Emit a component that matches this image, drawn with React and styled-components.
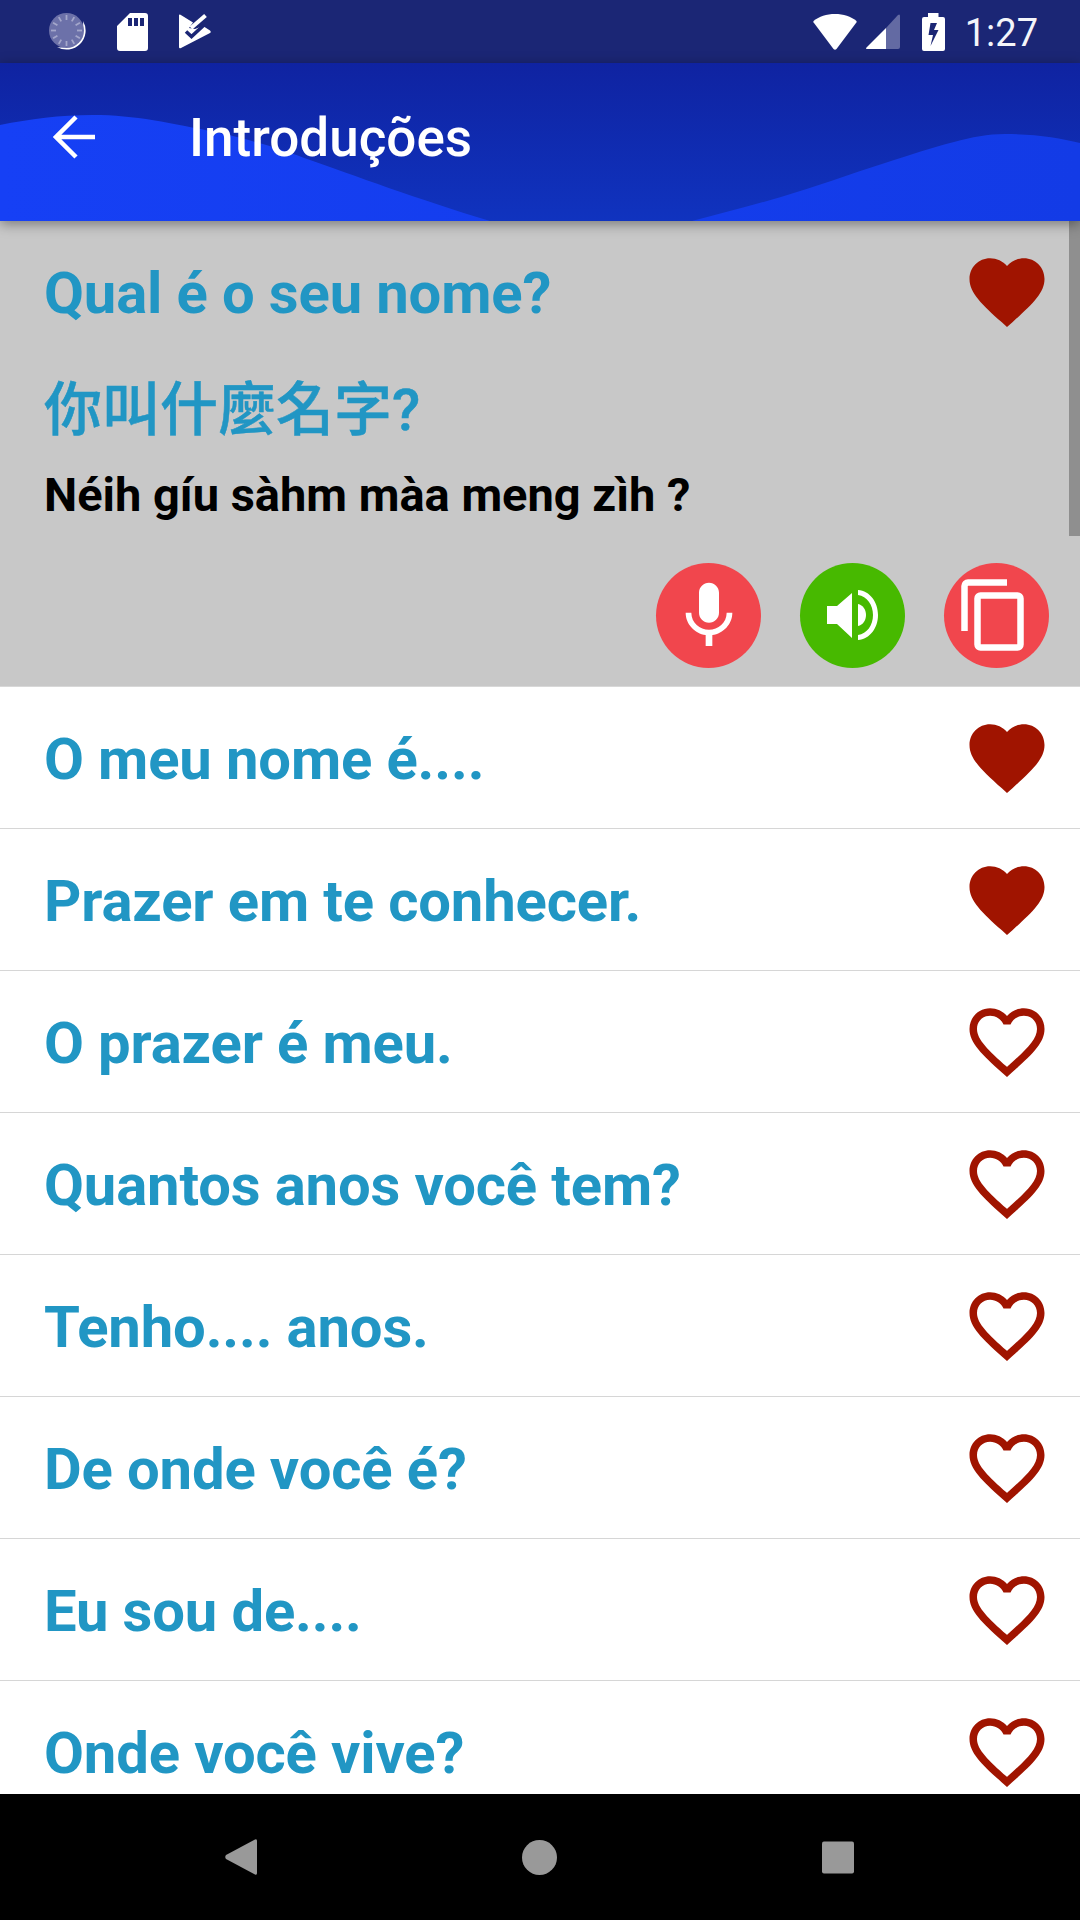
import styled, { createGlobalStyle } from "styled-components";

const GlobalStyle = createGlobalStyle`
    html, body {
        margin: 0;
        padding: 0;
        background: #fff;
    }
    * {
        box-sizing: border-box;
    }
`;

const Screen = styled.div`
    width: 1080px;
    height: 1920px;
    display: flex;
    flex-direction: column;
    overflow: hidden;
    font-family: Roboto, "Noto Sans CJK TC", sans-serif;
`;

const StatusBar = styled.div`
    height: 63px;
    flex: none;
    display: flex;
    align-items: center;
    justify-content: space-between;
    padding: 0 42px 0 36px;
    background: #1b2675;
    color: #fff;
`;

const StatusGroup = styled.div`
    display: flex;
    align-items: center;
`;

const StatusSlot = styled.div`
    width: ${(p) => p.$width}px;
    display: flex;
    justify-content: center;
`;

const Clock = styled.span`
    margin-left: 5px;
    padding-top: 4px;
    font-size: 38px;
    line-height: 59px;
    color: #f4f5fa;
`;

const AppBar = styled.header`
    position: relative;
    z-index: 2;
    height: 158px;
    flex: none;
    display: flex;
    align-items: center;
    background: linear-gradient(180deg, #0f23a1 0%, #1033bf 100%);
    box-shadow: 0 3px 12px rgba(0, 0, 0, 0.4);
`;

const Wave = styled.svg`
    position: absolute;
    left: 0;
    top: 0;
`;

const BackButton = styled.div`
    position: relative;
    width: 189px;
    padding-left: 53px;
    display: flex;
    margin-top: -11px;
`;

const Title = styled.h1`
    position: relative;
    margin: -8px 0 0;
    font-size: 53px;
    font-weight: 500;
    color: #fff;
`;

const Content = styled.main`
    position: relative;
    flex: 1;
    min-height: 0;
    overflow: hidden;
`;

const ScrollThumb = styled.div`
    position: absolute;
    top: 0;
    right: 0;
    width: 11px;
    height: 315px;
    background: #8f8f8f;
`;

const SelectedPanel = styled.section`
    height: 466px;
    background: #c8c8c8;
    border-bottom: 1px solid #d8d8d8;
`;

const Row = styled.div`
    height: 142px;
    display: flex;
    align-items: center;
    justify-content: space-between;
    padding: 0 28px 0 44px;
    border-bottom: ${(p) => (p.$flat ? "none" : "1px solid #d6d6d6")};
`;

const Phrase = styled.span`
    padding-top: 2px;
    font-size: 58px;
    font-weight: 700;
    letter-spacing: -0.15px;
    color: #2196c4;
`;

const Chinese = styled.div`
    margin-top: 8px;
    padding-left: 44px;
    font-size: 58px;
    line-height: 78px;
    font-weight: 500;
    color: #2196c4;
    -webkit-text-stroke: 0.5px #2196c4;
`;

const Romanized = styled.div`
    margin-top: 16px;
    padding-left: 44px;
    font-size: 47px;
    line-height: 60px;
    font-weight: 700;
    color: #000;
`;

const Actions = styled.div`
    display: flex;
    justify-content: flex-end;
    gap: 39px;
    margin-top: 38px;
    padding-right: 31px;
`;

const RoundButton = styled.div`
    width: 105px;
    height: 105px;
    border-radius: 50%;
    display: flex;
    align-items: center;
    justify-content: center;
    background: ${(p) => p.$color};
`;

const NavBar = styled.nav`
    height: 126px;
    flex: none;
    position: relative;
    z-index: 2;
    display: flex;
    align-items: center;
    padding-left: 225px;
    background: #000;
`;

const NavSlot = styled.div`
    width: ${(p) => p.$width}px;
    display: flex;
`;

const phrases = [
    { text: "O meu nome é....", liked: true },
    { text: "Prazer em te conhecer.", liked: true },
    { text: "O prazer é meu.", liked: false },
    { text: "Quantos anos você tem?", liked: false },
    { text: "Tenho.... anos.", liked: false },
    { text: "De onde você é?", liked: false },
    { text: "Eu sou de....", liked: false },
    { text: "Onde você vive?", liked: false },
];

const Heart = ({ liked }) => (
    <svg width="90" height="90" viewBox="0 0 24 24" fill="#a01400">
        {liked ? (
            <path d="M12 21.35l-1.45-1.32C5.4 15.36 2 12.28 2 8.5 2 5.42 4.42 3 7.5 3c1.74 0 3.41.81 4.5 2.09C13.09 3.81 14.76 3 16.5 3 19.58 3 22 5.42 22 8.5c0 3.78-3.4 6.86-8.55 11.54L12 21.35z" />
        ) : (
            <path d="M16.5 3c-1.74 0-3.41.81-4.5 2.09C10.91 3.81 9.24 3 7.5 3 4.42 3 2 5.42 2 8.5c0 3.78 3.4 6.86 8.55 11.54L12 21.35l1.45-1.32C18.6 15.36 22 12.28 22 8.5 22 5.42 19.58 3 16.5 3zm-4.4 15.55l-.1.1-.1-.1C7.14 14.24 4 11.39 4 8.5 4 6.5 5.5 5 7.5 5c1.54 0 3.04.99 3.57 2.36h1.87C13.46 5.99 14.96 5 16.5 5c2 0 3.5 1.5 3.5 3.5 0 2.89-3.14 5.74-7.9 10.05z" />
        )}
    </svg>
);

const SyncIcon = () => {
    const ticks = Array.from({ length: 12 }, (_, i) => i * 30);
    return (
        <svg width="38" height="38" viewBox="0 0 38 38">
            <path fill="#fff" d="M34 8A19 19 0 0 1 8 34C20 37 36 24 34 8z" />
            <circle cx="17.5" cy="17.5" r="17.5" fill="#6c71a9" />
            {ticks.map((a) => (
                <line key={a} x1="17.5" y1="2" x2="17.5" y2="7" stroke="#a4a7cb" strokeWidth="1.8" transform={`rotate(${a} 17.5 17.5)`} />
            ))}
        </svg>
    );
};

const SdIcon = () => (
    <svg width="31" height="38" viewBox="0 0 31 38">
        <path
            fill="#fff"
            fillRule="evenodd"
            d="M13 0h15a3 3 0 0 1 3 3v32a3 3 0 0 1-3 3H3a3 3 0 0 1-3-3V13zM11 5v8h4V5zM17 5v8h4V5zM23 5v8h4V5z"
        />
    </svg>
);

const TaskIcon = () => (
    <svg width="32" height="35" viewBox="0 0 32 35">
        <path fill="#fff" d="M0 1.5Q0 0 1.5 .8L14 8.500 10 14 16 15 24 12 31 16.500Q32.500 18 31 19L2 34Q0 35 0 33z" />
        <path fill="none" stroke="#fff" strokeWidth="4" d="M12 14L26.500 1.500" />
        <path fill="none" stroke="#1b2675" strokeWidth="3.600" d="M7 17.500l5.500 5L25 11" />
    </svg>
);

const WifiIcon = () => (
    <svg width="44" height="36" viewBox="0 0 44 36">
        <path fill="#fff" d="M22 0C13.500 0 6 2.700 .8 6.800Q0 7.600 .6 8.500L20.500 35Q22 36.500 23.500 35L43.400 8.500Q44 7.600 43.200 6.800C38 2.700 30.500 0 22 0z" />
    </svg>
);

const SignalIcon = () => (
    <svg width="34" height="35" viewBox="0 0 34 35">
        <path fill="#636aa3" d="M20 14L32 1Q34 -.5 34 2V33Q34 35 32 35H20z" />
        <path fill="#fff" d="M20 14V35H1Q-.5 35 .5 33.500z" />
    </svg>
);

const BatteryIcon = () => (
    <svg width="23" height="38" viewBox="0 0 23 38">
        <path
            fill="#fff"
            fillRule="evenodd"
            d="M6 0h10.500v4H21a2 2 0 0 1 2 2v30a2 2 0 0 1-2 2H2a2 2 0 0 1-2-2V6a2 2 0 0 1 2-2h4zM8.500 10L6.500 22h4.500L8.500 33 16.500 17h-4.500L15 10z"
        />
    </svg>
);

const MicIcon = () => (
    <svg width="80" height="80" viewBox="0 0 24 24" fill="#fff">
        <path d="M12 14c1.660 0 3-1.340 3-3V5c0-1.660-1.340-3-3-3S9 3.340 9 5v6c0 1.660 1.340 3 3 3zm5.300-3c0 3-2.540 5.100-5.300 5.100S6.700 14 6.700 11H5c0 3.410 2.720 6.230 6 6.720V21h2v-3.280c3.280-.48 6-3.300 6-6.720h-1.700z" />
    </svg>
);

const SpeakerIcon = () => (
    <svg width="105" height="105" viewBox="0 0 105 105" fill="#fff">
        <path d="M27 43H37L52 30V75L37 61H27z" />
        <path d="M58 41C63 42 66 47 66 52C66 57 63 62 58 63z" />
        <path d="M58 27C70 28 78 39 78 52C78 65 70 76 58 77V72C67 71 73 62 73 52C73 42 67 33 58 32z" />
    </svg>
);

const CopyIcon = () => (
    <svg width="105" height="105" viewBox="0 0 105 105" fill="none" stroke="#fff" strokeWidth="6.500">
        <path d="M20.500 68V23a3.500 3.500 0 0 1 3.500-3.500H63" />
        <rect x="33.500" y="32.500" width="43" height="52" rx="3" />
    </svg>
);

export default function App() {
    return (
        <Screen>
            <GlobalStyle />
            <StatusBar>
                <StatusGroup>
                    <StatusSlot $width={64}><SyncIcon /></StatusSlot>
                    <StatusSlot $width={64}><SdIcon /></StatusSlot>
                    <StatusSlot $width={62}><TaskIcon /></StatusSlot>
                </StatusGroup>
                <StatusGroup>
                    <StatusSlot $width={46}><WifiIcon /></StatusSlot>
                    <StatusSlot $width={50}><SignalIcon /></StatusSlot>
                    <StatusSlot $width={52}><BatteryIcon /></StatusSlot>
                    <Clock>1:27</Clock>
                </StatusGroup>
            </StatusBar>
            <AppBar>
                <Wave width="1080" height="158" viewBox="0 0 1080 158">
                    <defs>
                        <linearGradient id="waveFill" x1="0" y1="0" x2="1" y2="0">
                            <stop offset="0" stopColor="#1640f5" />
                            <stop offset="1" stopColor="#133be6" />
                        </linearGradient>
                    </defs>
                    <path
                        fill="url(#waveFill)"
                        d="M0 62C30 56 60 52 93 52C135 52 170 60 220 70C260 79 285 88 310 97C350 111 420 137 490 158H692C722 150 750 143 781 134C815 124 850 111 885 100C910 92 930 85 954 79C972 74 988 71 1005 71C1035 71 1060 75 1080 80V158H0z"
                    />
                </Wave>
                <BackButton>
                    <svg width="46" height="46" viewBox="0 0 46 46" fill="none" stroke="#fff" strokeWidth="4.500">
                        <path d="M42 23H5M23 3L3 23L23 43" />
                    </svg>
                </BackButton>
                <Title>Introduções</Title>
            </AppBar>
            <Content>
                <ScrollThumb />
                <SelectedPanel>
                    <Row $flat>
                        <Phrase>Qual é o seu nome?</Phrase>
                        <Heart liked />
                    </Row>
                    <Chinese lang="zh-Hant">你叫什麼名字?</Chinese>
                    <Romanized>Néih gíu sàhm màa meng zìh ?</Romanized>
                    <Actions>
                        <RoundButton $color="#f1464d"><MicIcon /></RoundButton>
                        <RoundButton $color="#47b900"><SpeakerIcon /></RoundButton>
                        <RoundButton $color="#f1464d"><CopyIcon /></RoundButton>
                    </Actions>
                </SelectedPanel>
                {phrases.map((item) => (
                    <Row key={item.text}>
                        <Phrase>{item.text}</Phrase>
                        <Heart liked={item.liked} />
                    </Row>
                ))}
            </Content>
            <NavBar>
                <NavSlot $width={297}>
                    <svg width="32" height="36" viewBox="0 0 32 36">
                        <path fill="#999" d="M30 .5Q32 -.5 32 2V34Q32 36.500 30 35.500L1 20Q-.5 18 1 16z" />
                    </svg>
                </NavSlot>
                <NavSlot $width={300}>
                    <svg width="35" height="35" viewBox="0 0 35 35">
                        <circle cx="17.500" cy="17.500" r="17.500" fill="#999" />
                    </svg>
                </NavSlot>
                <NavSlot $width={32}>
                    <svg width="33" height="33" viewBox="0 0 33 33">
                        <rect width="33" height="33" rx="2" fill="#999" />
                    </svg>
                </NavSlot>
            </NavBar>
        </Screen>
    );
}
